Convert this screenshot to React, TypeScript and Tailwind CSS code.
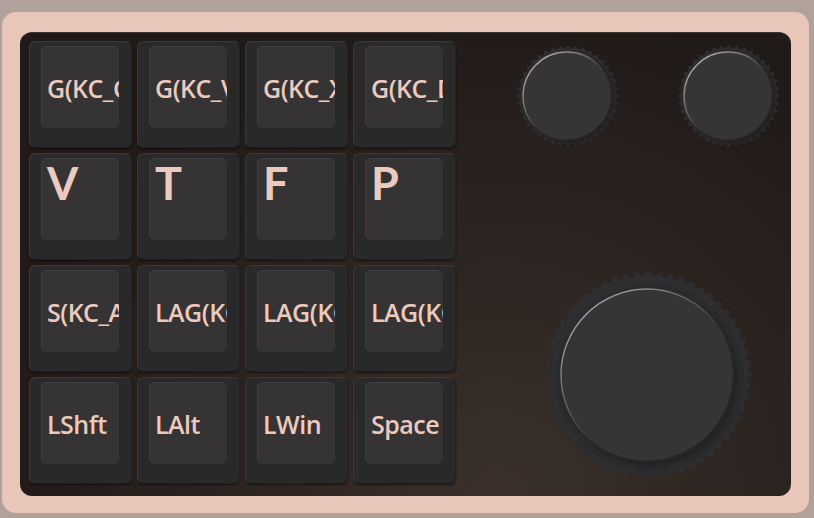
import React, { useId } from 'react';

type KeyDef = { label: string; big?: boolean };

const rows: KeyDef[][] = [
  [{ label: 'G(KC_C)' }, { label: 'G(KC_V)' }, { label: 'G(KC_X)' }, { label: 'G(KC_D)' }],
  [{ label: 'V', big: true }, { label: 'T', big: true }, { label: 'F', big: true }, { label: 'P', big: true }],
  [{ label: 'S(KC_A)' }, { label: 'LAG(KC_1)' }, { label: 'LAG(KC_2)' }, { label: 'LAG(KC_3)' }],
  [{ label: 'LShft' }, { label: 'LAlt' }, { label: 'LWin' }, { label: 'Space' }],
];

const Key: React.FC<{ k: KeyDef }> = ({ k }) => (
  <div className="w-[103px] h-[107px] rounded-[6px] bg-[#2a2929] border border-[#3c3a3a] border-b-[#1f1d1d] border-r-[#252323] pl-[11px] pr-[12px] pt-[4px] pb-[19px] shadow-[0_1px_2px_rgba(0,0,0,0.5)]">
    <div
      className={`h-full rounded-[6px] bg-[#363334] border-t border-l border-[#413e3e] overflow-hidden whitespace-nowrap text-[#eccabe] flex ${
        k.big
          ? "items-start pl-[5px] pt-0 text-[45px] font-bold leading-[1.1] font-['Lato',sans-serif]"
          : "items-center pl-[5px] pt-[3px] text-[25px] font-semibold font-['Open_Sans',sans-serif] tracking-[-0.5px]"
      }`}
    >
      {k.label}
    </div>
  </div>
);

const Knob: React.FC<{ size: number; rOuter: number; rInner: number; rDisc: number; teeth: number }> = ({
  size,
  rOuter,
  rInner,
  rDisc,
  teeth,
}) => {
  const id = useId().replace(/:/g, '');
  const c = size / 2;
  const pts: string[] = [];
  for (let i = 0; i < teeth * 2; i++) {
    const a = (Math.PI * i) / teeth;
    const r = i % 2 === 0 ? rOuter : rInner;
    pts.push(`${(c + r * Math.cos(a)).toFixed(2)},${(c + r * Math.sin(a)).toFixed(2)}`);
  }
  return (
    <svg width={size} height={size} viewBox={`0 0 ${size} ${size}`} className="shrink-0">
      <defs>
        <linearGradient id={`hl${id}`} x1="0.15" y1="0.1" x2="0.85" y2="0.9">
          <stop offset="0" stopColor="#a9a7a7" />
          <stop offset="0.3" stopColor="#6d6b6b" />
          <stop offset="0.55" stopColor="#363435" />
          <stop offset="1" stopColor="#262425" />
        </linearGradient>
        <filter id={`bl${id}`} x="-20%" y="-20%" width="140%" height="140%">
          <feGaussianBlur stdDeviation={size / 60} />
        </filter>
      </defs>
      <polygon points={pts.join(' ')} fill="#2e2d2f" />
      <circle cx={c + size / 90} cy={c + size / 60} r={rDisc + 2} fill="#1c1b1c" opacity="0.7" filter={`url(#bl${id})`} />
      <circle cx={c - 1} cy={c} r={rDisc} fill="#363435" stroke={`url(#hl${id})`} strokeWidth="1.4" />
    </svg>
  );
};

export default function App() {
  return (
    <div className="w-[814px] h-[518px] bg-[#b1a19b] pt-[12px] pl-[2px]">
      <div className="w-[807px] h-[501px] rounded-[14px] bg-[#e8c6b9] pt-[20px] pb-[17px] px-[18px]">
        <div className="h-full rounded-[12px] border-t border-[#3a3433] bg-[radial-gradient(ellipse_at_62%_100%,#3b302c_0%,#2c2420_40%,#201a18_75%)] pl-[9px] pt-[8px] flex items-start">
          <div className="grid grid-cols-[repeat(4,103px)] auto-rows-[107px] gap-[5px]">
            {rows.flat().map((k, i) => (
              <Key key={i} k={k} />
            ))}
          </div>
          <div className="flex flex-col">
            <div className="flex mt-[3px] ml-[60px] gap-[57px]">
              <Knob size={104} rOuter={51} rInner={47.5} rDisc={44} teeth={40} />
              <Knob size={104} rOuter={51} rInner={47.5} rDisc={44} teeth={40} />
            </div>
            <div className="mt-[121px] ml-[86px]">
              <Knob size={212} rOuter={104} rInner={99} rDisc={86} teeth={56} />
            </div>
          </div>
        </div>
      </div>
    </div>
  );
}
